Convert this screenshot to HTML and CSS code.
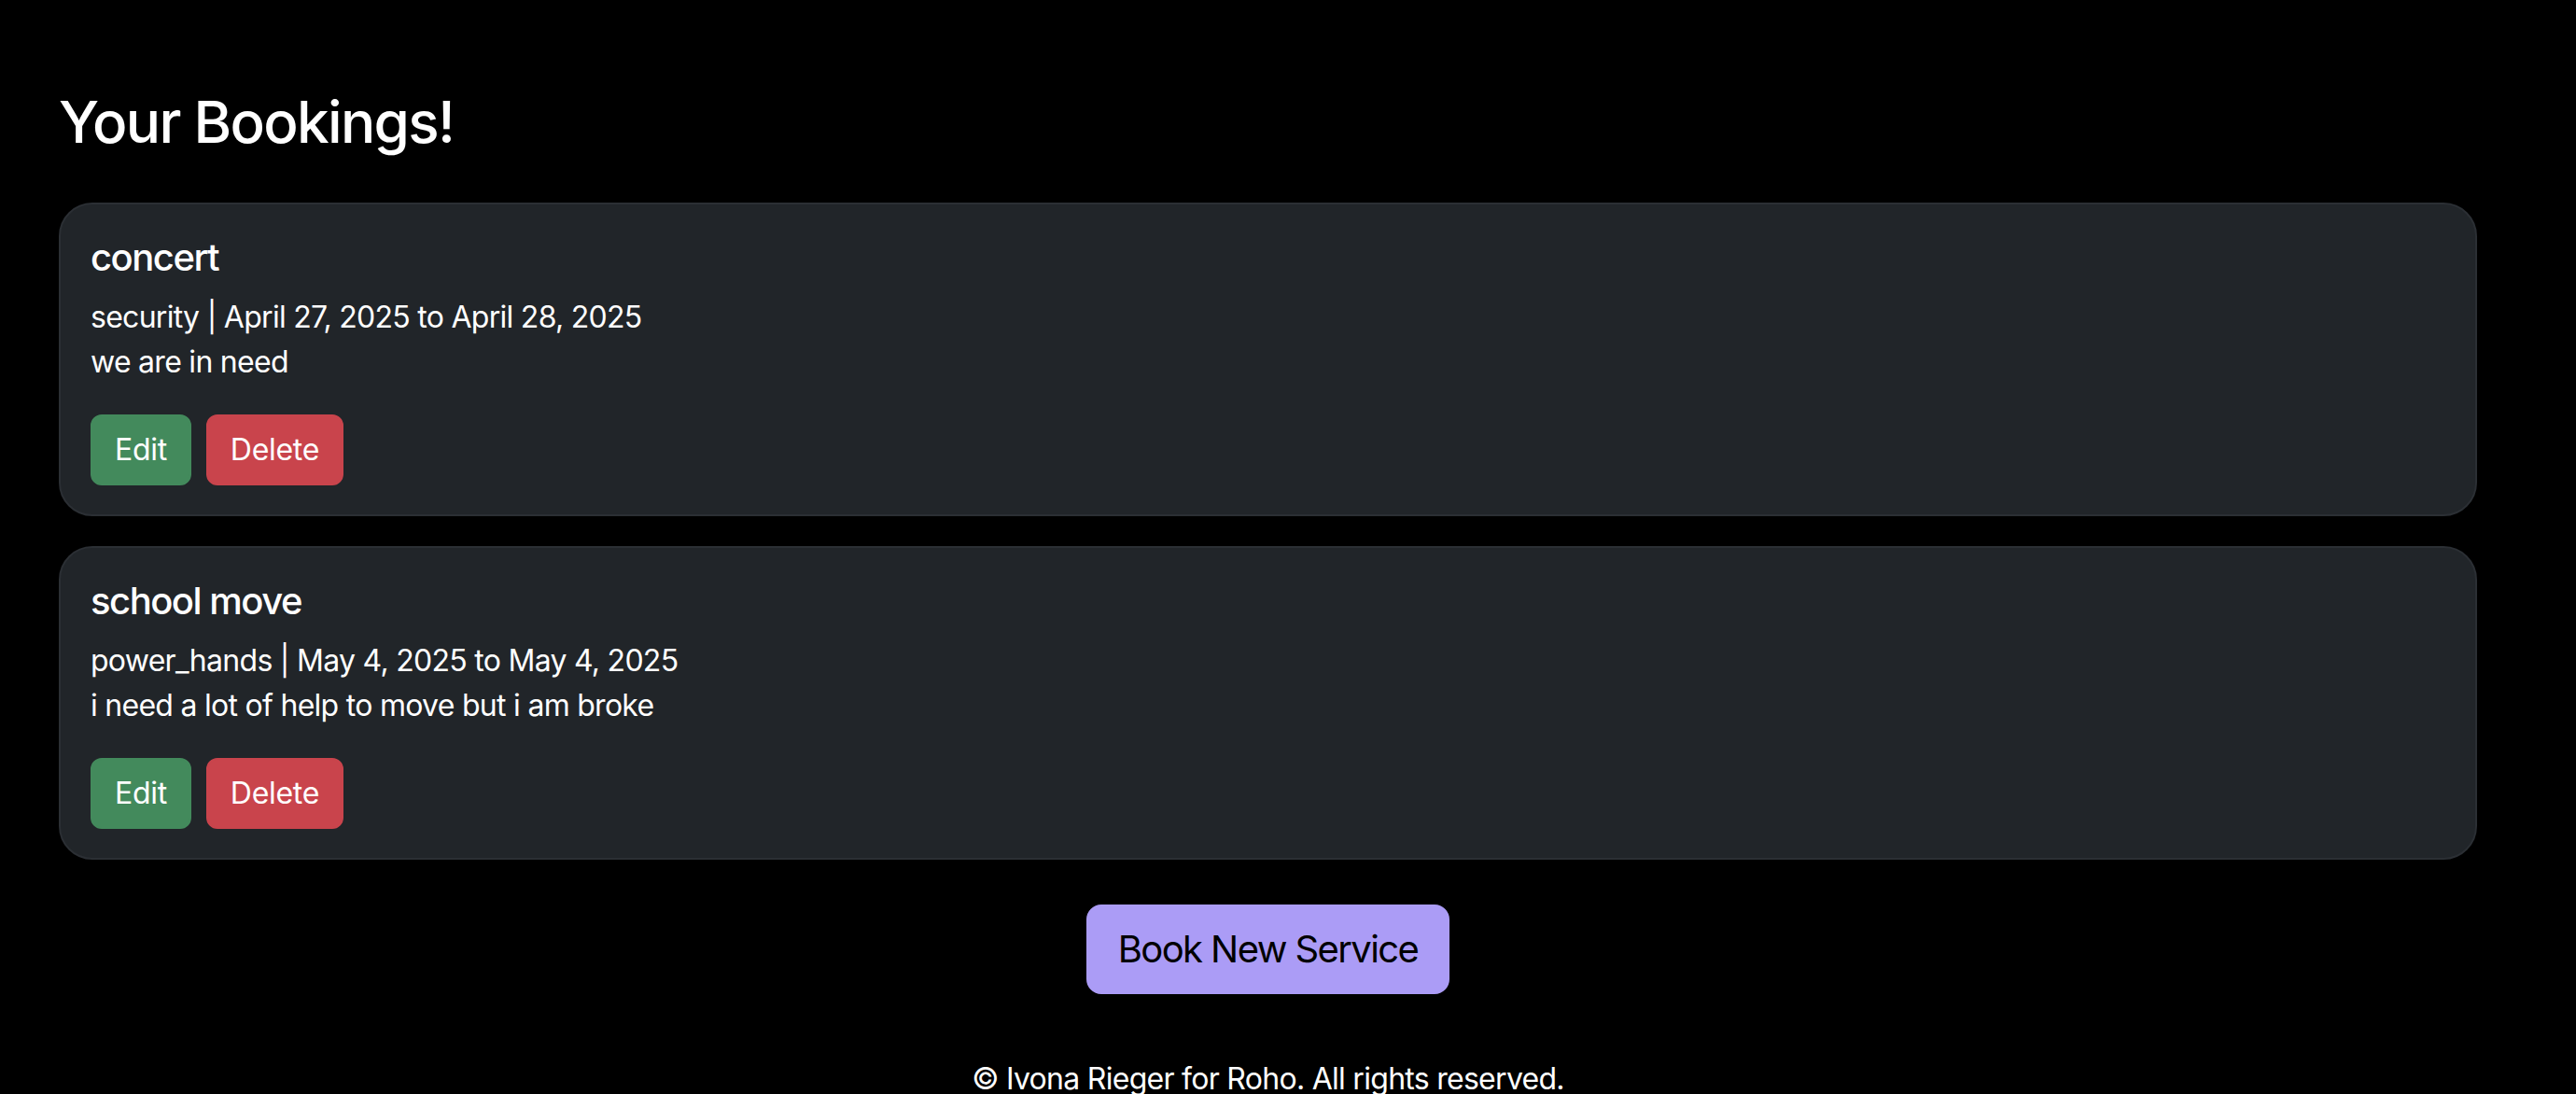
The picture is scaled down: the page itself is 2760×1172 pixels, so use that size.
FILE: index.html
```html
<!DOCTYPE html>
<html lang="en">
<head>
<meta charset="utf-8">
<title>Your Bookings</title>
<link rel="stylesheet" href="styles.css">
</head>
<body>
<main class="page">
  <h2 class="page-title">Your Bookings!</h2>

  <section class="booking-card">
    <h5 class="booking-title">concert</h5>
    <p class="booking-meta">security | April 27, 2025 to April 28, 2025</p>
    <p class="booking-desc">we are in need</p>
    <div class="booking-actions">
      <button class="btn btn-edit">Edit</button>
      <button class="btn btn-delete">Delete</button>
    </div>
  </section>

  <section class="booking-card">
    <h5 class="booking-title">school move</h5>
    <p class="booking-meta">power_hands | May 4, 2025 to May 4, 2025</p>
    <p class="booking-desc">i need a lot of help to move but i am broke</p>
    <div class="booking-actions">
      <button class="btn btn-edit">Edit</button>
      <button class="btn btn-delete">Delete</button>
    </div>
  </section>

  <div class="new-row">
    <button class="btn-new">Book New Service</button>
  </div>

  <footer class="site-footer">© Ivona Rieger for Roho. All rights reserved.</footer>
</main>
</body>
</html>
```

FILE: styles.css
```css
* { box-sizing: border-box; }

html, body {
  margin: 0;
  padding: 0;
  background: #000;
  color: #fff;
  font-family: Inter, "Noto Sans", "Liberation Sans", sans-serif;
  overflow: hidden;
}

.page {
  padding: 93px 106px 0 63px;
}

.page-title {
  margin: 0 0 47px 0;
  font-size: 62px;
  line-height: 76.8px;
  font-weight: 500;
  letter-spacing: -1.7px;
}

.booking-card {
  background: #212529;
  border: 2px solid #2b2f34;
  border-radius: 36px;
  padding: 33px 32px 31px 32px;
  margin-bottom: 32px;
}

.booking-title {
  margin: 0 0 16px 0;
  font-size: 40px;
  line-height: 48px;
  font-weight: 500;
  letter-spacing: -1.5px;
}

.booking-meta,
.booking-desc {
  margin: 0;
  font-size: 32px;
  line-height: 48px;
  font-weight: 400;
  letter-spacing: -0.72px;
}

.booking-actions {
  margin-top: 32px;
  display: flex;
  gap: 16px;
}

.btn {
  font-family: inherit;
  font-size: 32px;
  line-height: 48px;
  padding: 12px 24px;
  border: 2px solid transparent;
  border-radius: 12px;
  color: #fff;
  letter-spacing: -0.3px;
  cursor: pointer;
}

.btn-edit { background: #438a5c; border-color: #438a5c; }
.btn-delete { background: #c9444c; border-color: #c9444c; }

.new-row {
  display: flex;
  justify-content: center;
  margin-top: 48px;
}

.btn-new {
  font-family: inherit;
  font-size: 40px;
  line-height: 60px;
  padding: 16px 32px;
  border: 2px solid #ab9cf6;
  background: #ab9cf6;
  color: #000;
  border-radius: 16px;
  letter-spacing: -1.6px;
}

.site-footer {
  margin-top: 67px;
  text-align: center;
  font-size: 32px;
  line-height: 48px;
  letter-spacing: -0.72px;
}
```
